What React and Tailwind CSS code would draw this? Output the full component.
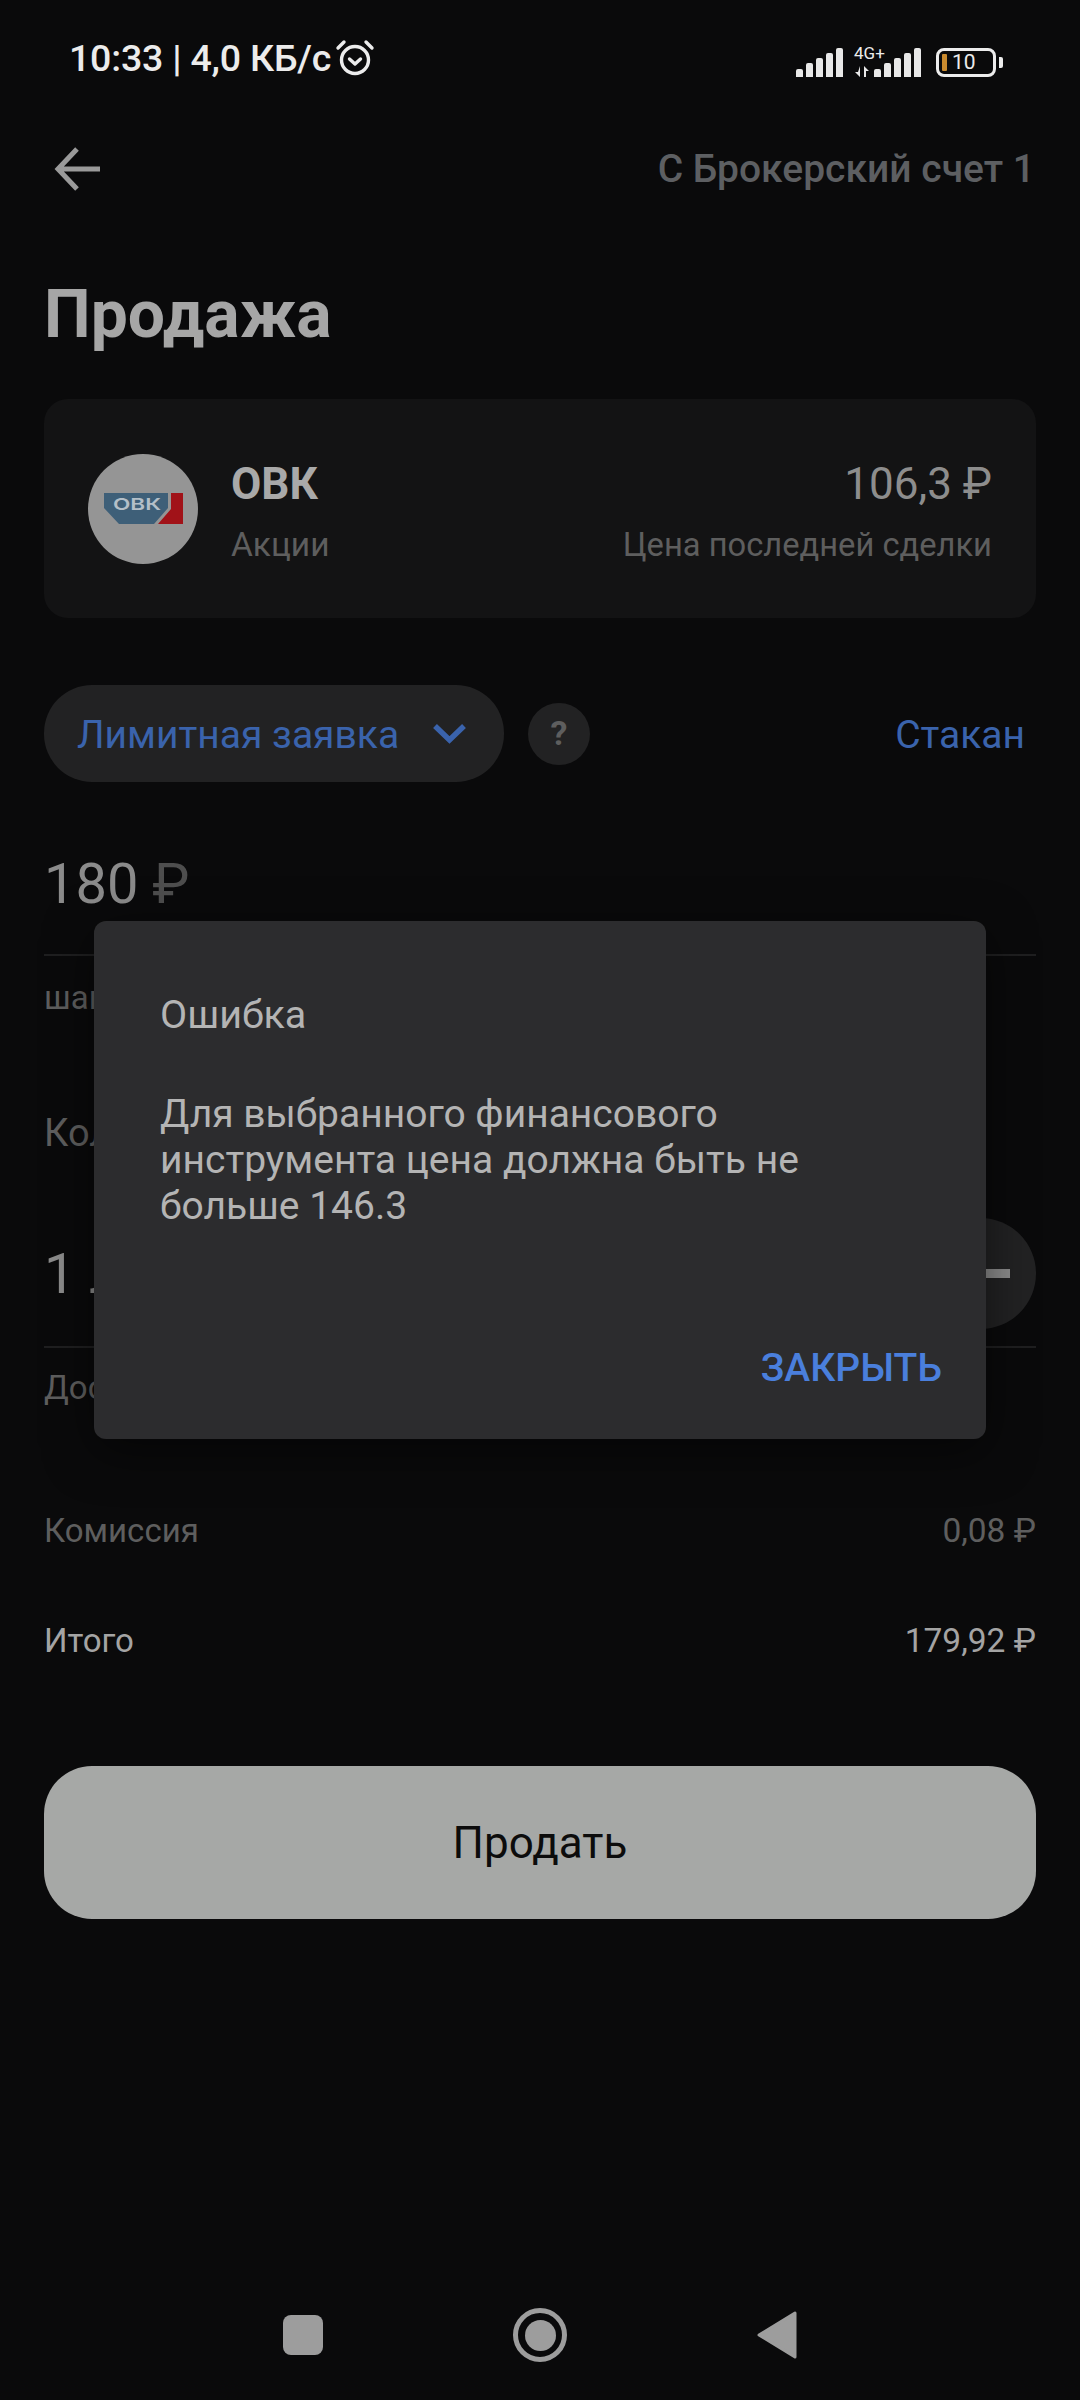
/**
 * Order form (sell) with the error dialog open, dimmed Android-style.
 */
import { useState } from "react";

function StatusBars() {
  const heights = [8, 14, 19, 24, 29];
  return (
    <div className="flex items-end gap-[3px]">
      {heights.map((h) => (
        <span key={h} className="w-[7px] rounded-t-[2px] bg-[#e8e8e8]" style={{ height: h }} />
      ))}
    </div>
  );
}

function StatusBar() {
  return (
    <div className="flex h-[79px] items-end justify-between pl-[69px] pr-[77px] text-[#ececec]">
      <div className="flex items-center gap-[4px] text-[37.5px] font-medium leading-[42px] tracking-[-0.2px]">
        <span>10:33 | 4,0 КБ/с</span>
        <svg width="40" height="38" viewBox="0 0 40 38" fill="none" stroke="#ececec" strokeWidth="3.4" strokeLinecap="round" strokeLinejoin="round">
          <circle cx="20" cy="21" r="13.5" />
          <path d="M14.5 20l5.5 5 5.5-5" />
          <path d="M3 9l6-6M37 9l-6-6" />
        </svg>
      </div>
      <div className="flex items-end pb-[2px]">
        <StatusBars />
        <div className="ml-[11px] flex w-[36px] flex-col items-start">
          <span className="text-[17px] leading-[17px] mb-[4px]">4G+</span>
          <svg width="16" height="11" viewBox="0 0 16 11" fill="#e8e8e8">
            <path d="M6 0v11L1 6h3zM10 0v11h2V5h3z" />
          </svg>
        </div>
        <div className="-ml-[16px]">
          <StatusBars />
        </div>
        <div className="ml-[15px] flex items-center gap-[3px]">
          <div className="flex h-[29px] w-[60px] items-center rounded-[8px] border-[3px] border-[#ececec] pl-[3px]">
            <span className="h-[17px] w-[5px] rounded-[1px] bg-[#c98a2e]" />
            <span className="ml-[5px] text-[21px] leading-none">10</span>
          </div>
          <span className="h-[11px] w-[4px] rounded-r-[2px] bg-[#ececec]" />
        </div>
      </div>
    </div>
  );
}

function Row({ label, value, strong }) {
  return (
    <div className={`flex items-center justify-between leading-[40px] ${strong ? "text-[#a4a4a4]" : "text-[#5e5e5e]"}`}>
      <span className="text-[33px]">{label}</span>
      <span className="text-[33.5px]">{value}</span>
    </div>
  );
}

export default function App() {
  const [open, setOpen] = useState(true);

  return (
    <div className="relative flex h-[2400px] w-[1080px] flex-col overflow-hidden bg-[#0a0a0b] font-['Roboto',sans-serif]">
      <StatusBar />

      <div className="mt-[68px] flex items-center justify-between pl-[54px] pr-[45px]">
        <svg width="46" height="44" viewBox="0 0 46 44" fill="none" stroke="#9a9a9a" strokeWidth="5">
          <path d="M23 2L4 22l19 20M4 22h42" />
        </svg>
        <span className="text-[39px] font-medium leading-[44px] text-[#5d5f62]">С Брокерский счет 1</span>
      </div>

      <h1 className="mx-[44px] mt-[89px] text-[66px] font-bold leading-[70px] text-[#a6a6a6]">Продажа</h1>

      <div className="mx-[44px] mt-[49px] flex h-[219px] items-center justify-between rounded-[24px] bg-[#131314] px-[44px]">
        <div className="flex items-center gap-[33px]">
          <div className="flex h-[110px] w-[110px] items-center justify-center rounded-full bg-[#959595]">
            <svg width="79" height="31" viewBox="0 0 79 31">
              <path d="M0 0h64v15L50 31H15L0 15z" fill="#3e5f78" />
              <path d="M67 0h12v31H54l13-15z" fill="#a11218" />
              <text x="9" y="17" fontSize="16" fontFamily="Inter, sans-serif" fontWeight="600" textLength="48" lengthAdjust="spacingAndGlyphs" fill="#b4bfc8">ОВК</text>
            </svg>
          </div>
          <div className="mt-[8px] flex flex-col gap-[20px]">
            <span className="text-[44px] font-bold leading-[44px] text-[#a9a9a9]">ОВК</span>
            <span className="text-[33.5px] leading-[38px] text-[#5e5e5e]">Акции</span>
          </div>
        </div>
        <div className="mt-[8px] flex flex-col items-end gap-[20px]">
          <span className="text-[44px] leading-[44px] text-[#8d8d8d]">106,3 ₽</span>
          <span className="text-[32.7px] leading-[38px] text-[#5e5e5e]">Цена последней сделки</span>
        </div>
      </div>

      <div className="mx-[44px] mt-[67px] flex items-center">
        <button className="flex h-[97px] w-[460px] items-center rounded-[48px] bg-[#222223] pl-[33px] text-[39px] text-[#3a63ac]">
          <span className="pt-[4px]">Лимитная заявка</span>
          <svg className="ml-[33px]" width="35" height="22" viewBox="0 0 35 22" fill="none" stroke="#3a63ac" strokeWidth="5.5">
            <path d="M3 3l14.5 14L32 3" />
          </svg>
        </button>
        <span className="ml-[24px] flex h-[62px] w-[62px] items-center justify-center rounded-full bg-[#222223] text-[34px] font-bold text-[#5e5e5e]">?</span>
        <span className="ml-auto mr-[11px] pt-[4px] text-[39px] text-[#3a63ac]">Стакан</span>
      </div>

      <div className="mx-[44px] mt-[65px] h-[109px] border-b-2 border-[#1f1f20] text-[56px] leading-[74px] text-[#8b8b8b]">
        180 <span className="text-[#4e4e4e]">₽</span>
      </div>
      <div className="mx-[44px] mt-[22px] text-[33px] leading-[40px] text-[#5e5e5e]">шаг цены 0,1 ₽</div>

      <div className="mx-[44px] mt-[92px] text-[38px] leading-[46px] text-[#5e5e5e]">Количество</div>

      <div className="mx-[44px] mt-[62px] flex h-[130px] items-start justify-between border-b-2 border-[#1f1f20]">
        <span className="mt-[23px] text-[56px] leading-[66px] text-[#8b8b8b]">1 лот</span>
        <span className="flex h-[111px] w-[111px] items-center justify-center rounded-full bg-[#222223]">
          <span className="h-[9px] w-[58px] shrink-0 bg-[#8b8b8b]" />
        </span>
      </div>
      <div className="mx-[44px] mt-[20px] text-[33px] leading-[40px] text-[#5e5e5e]">Доступно</div>

      <div className="mx-[44px] mt-[103px]">
        <Row label="Комиссия" value="0,08 ₽" />
      </div>
      <div className="mx-[44px] mt-[70px]">
        <Row label="Итого" value="179,92 ₽" strong />
      </div>

      <button className="mx-[44px] mt-[105px] h-[153px] rounded-[48px] bg-[#a6a8a6] text-[44px] text-[#0c0c0c]">Продать</button>

      <div className="mt-auto mb-[38px] flex items-center pl-[283px]">
        <span className="h-[40px] w-[40px] rounded-[8px] bg-[#9d9d9d]" />
        <span className="ml-[190px] flex h-[54px] w-[54px] items-center justify-center rounded-full border-[5px] border-[#9d9d9d]">
          <span className="h-[31px] w-[31px] rounded-full bg-[#9d9d9d]" />
        </span>
        <svg className="ml-[190px]" width="40" height="48" viewBox="0 0 40 48" fill="#9d9d9d" stroke="#9d9d9d" strokeWidth="3" strokeLinejoin="round">
          <path d="M38 2v44L2 24z" />
        </svg>
      </div>

      {open && (
        <div className="absolute left-[94px] top-[921px] flex h-[518px] w-[892px] flex-col rounded-[12px] bg-[#2c2c2e] pl-[66px] pr-[44px] pt-[74px] shadow-[0_12px_48px_rgba(0,0,0,0.5)]">
          <div className="text-[39.5px] leading-[40px] text-[#b4b4b4]">Ошибка</div>
          <p className="mt-[56px] w-[700px] text-[39px] leading-[46px] text-[#b4b4b4]">
            Для выбранного финансового инструмента цена должна быть не больше 146.3
          </p>
          <button
            onClick={() => setOpen(false)}
            className="ml-auto mt-[117px] text-[39px] font-medium leading-[44px] text-[#4a7fdc]"
          >
            ЗАКРЫТЬ
          </button>
        </div>
      )}
    </div>
  );
}
